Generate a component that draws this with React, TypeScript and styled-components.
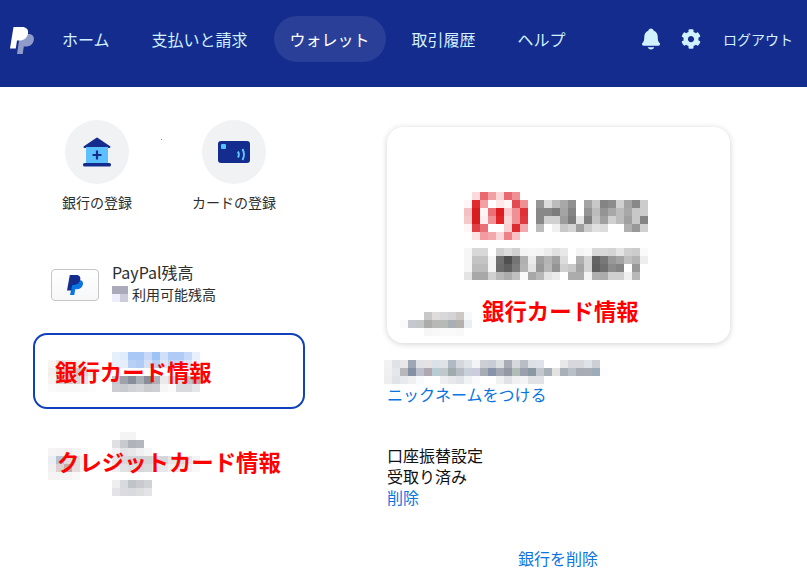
import { createGlobalStyle } from "styled-components";
import styled from "styled-components";
import { FaCog } from "react-icons/fa";
import { IoNotifications } from "react-icons/io5";

const GlobalStyle = createGlobalStyle`
    html, body {
        margin: 0;
        padding: 0;
        background: #fff;
    }
    body {
        font-family: "Noto Sans CJK JP", "Noto Sans", sans-serif;
        color: #1a1a1a;
    }
`;

const PageEl = styled.div`
    width: 807px;
    height: 584px;
    overflow: hidden;
`;

const HeaderEl = styled.header`
    height: 87px;
    background: #142c8e;
    display: flex;
    align-items: flex-start;
    box-sizing: border-box;
    padding: 16px 14px 0 10px;
`;

const LogoEl = styled.svg`
    width: 24px;
    height: 29px;
    margin-top: 10px;
    margin-right: 12px;
    flex: none;
`;

const NavEl = styled.nav`
    display: flex;
    gap: 10px;
`;

const NavItemEl = styled.a<{ $active?: boolean }>`
    height: 46px;
    padding: 0 16px;
    border-radius: 23px;
    display: flex;
    align-items: center;
    font-size: 16px;
    color: ${(props) => (props.$active ? "#fff" : "#d1f1ff")};
    background: ${(props) => (props.$active ? "#2a3f97" : "transparent")};
`;

const HeaderRightEl = styled.div`
    margin-left: auto;
    height: 46px;
    display: flex;
    align-items: center;
    color: #d1f1ff;
`;

const BellEl = styled(IoNotifications)`
    font-size: 24px;
    margin-right: 18px;
`;

const GearEl = styled(FaCog)`
    font-size: 20px;
    margin-right: 22px;
`;

const LogoutEl = styled.a`
    font-size: 14px;
    color: #d1f1ff;
`;

const MainEl = styled.main`
    display: flex;
    padding-left: 33px;
`;

const LeftColEl = styled.section`
    width: 272px;
    position: relative;
`;

const ActionsEl = styled.div`
    display: flex;
    padding: 33px 0 0 16px;
    gap: 41px;
`;

const ActionEl = styled.div`
    width: 96px;
    display: flex;
    flex-direction: column;
    align-items: center;
`;

const CircleEl = styled.div`
    width: 64px;
    height: 64px;
    border-radius: 50%;
    background: #f1f2f4;
    display: flex;
    align-items: center;
    justify-content: center;
`;

const ActionLabelEl = styled.div`
    margin-top: 8px;
    font-size: 14px;
    line-height: 20px;
    white-space: nowrap;
    color: #2c2e2f;
`;

const SpeckEl = styled.i`
    position: absolute;
    left: 128px;
    top: 52px;
    width: 1px;
    height: 1px;
    background: #8a8a8a;
`;

const BalanceRowEl = styled.div`
    display: flex;
    align-items: flex-start;
    margin: 50px 0 0 18px;
    gap: 13px;
`;

const CardThumbEl = styled.div`
    width: 46px;
    height: 30px;
    margin-top: 7px;
    border: 1px solid #c4c6c8;
    border-radius: 4px;
    background: linear-gradient(#fff, #f7f7f7);
    display: flex;
    align-items: center;
    justify-content: center;
`;

const BalanceNameEl = styled.div`
    font-size: 16px;
    line-height: 20px;
    color: #2c2e2f;
`;

const BalanceSubEl = styled.div`
    display: flex;
    align-items: center;
    gap: 4px;
    font-size: 14px;
    line-height: 16px;
    margin-top: 4px;
    color: #2c2e2f;
`;

const AccountEl = styled.div<{ $selected?: boolean }>`
    position: relative;
    width: 272px;
    height: 76px;
    box-sizing: border-box;
    margin-top: ${(props) => (props.$selected ? "31px" : "21px")};
    border: ${(props) => (props.$selected ? "2px solid #1040bc" : "2px solid transparent")};
    border-radius: 14px;
`;

const AccountMosaicEl = styled.div<{ $top: number }>`
    position: absolute;
    left: 13px;
    top: ${(props) => props.$top}px;
    line-height: 0;
`;

const AnnotationEl = styled.div<{ $left?: number; $top?: number }>`
    position: absolute;
    left: ${(props) => props.$left ?? 0}px;
    top: ${(props) => props.$top ?? 0}px;
    font-size: 22.4px;
    line-height: 30px;
    font-weight: 700;
    color: #f00;
    white-space: nowrap;
`;

const RightColEl = styled.section`
    margin-left: 82px;
    width: 343px;
    position: relative;
    padding-top: 40px;
`;

const BankCardEl = styled.div`
    position: relative;
    height: 216px;
    box-sizing: border-box;
    border-radius: 16px;
    background: #fff;
    box-shadow: 0 1px 6px rgba(0, 0, 0, 0.18);
    padding: 65px 0 0 77px;
`;

const LogoMosaicRowEl = styled.div`
    display: flex;
    line-height: 0;
`;

const LogoNameEl = styled.div`
    margin: 8px 0 0 8px;
    line-height: 0;
`;

const LogoLowerEl = styled.div`
    margin-top: 8px;
    line-height: 0;
`;

const CardFooterMosaicEl = styled.div`
    position: absolute;
    left: 13px;
    top: 185px;
    line-height: 0;
`;

const NickMosaicEl = styled.div`
    margin: 17px 0 0 -3px;
    line-height: 0;
`;

const LinkEl = styled.a`
    display: block;
    font-size: 16px;
    line-height: 21px;
    color: #0a75e0;
`;

const StatusEl = styled.div`
    margin-top: 41px;
    font-family: "Liberation Sans", "Noto Sans CJK JP", sans-serif;
    font-size: 16px;
    line-height: 21px;
    color: #111;
`;

const RemoveEl = styled(LinkEl)`
    margin: 39px 0 0 131px;
`;

// モザイクは1セル8pxの色データで描く
function Mosaic({ rows, cell = 8 }: { rows: string[]; cell?: number }) {
    const grid = rows.map((row) => row.split(" "));
    const cols = Math.max(...grid.map((row) => row.length));
    return (
        <svg
            width={cols * cell}
            height={grid.length * cell}
            shapeRendering="crispEdges"
        >
            {grid.map((row, y) =>
                row.map((color, x) =>
                    color === "." ? null : (
                        <rect
                            key={`${x}-${y}`}
                            x={x * cell}
                            y={y * cell}
                            width={cell}
                            height={cell}
                            fill={`#${color}`}
                        />
                    )
                )
            )}
        </svg>
    );
}

const BALANCE_MOSAIC = ["aab aab", "eef ccd"];

const BANK_MOSAIC = [
    ". . . . . . . . e6effc e0ebfc a8c8f6 a8c8f6 c8d8f6 9cc4f4 d0e0f8 b0ccf6 b0ccf6 c8d8f8 e8f0fb .",
    "f8f4f2 f0e4e0 f0e8e4 f4f0ee f8f6f4 fafafa . . e8f0fc e4eefc b8d0f6 b0ccf6 d4e0f8 b8d0f6 dce8fa c0d4f8 c4d8f8 d8e4f8 f0f4fc .",
    "f2eeec d8d4d2 cfcbc8 ccc8c8 dcd8d8 ececec f6f6f6 . fff fff fff fff fff fff fff fff fff fff fff .",
    "f6f2f0 d4d0cc d0ccc8 d8d4d0 e8e6e4 f6f6f6 . . c4c6ce 9ea2aa 8a8e9c a8b0b6 8a8e9c aab0b6 e8eaec d8dadf d8dade c0c4c8 a8acb4 f0f6fc",
    "fafafa f8f8f8 f8f8f8 f8f8f8 fafafa fcfcfc . . ccccd2 c8cacf d0d2d6 d4d6da cacccf ccd0d4 f6f6f6 fafafa d8dade d8dade e4e6e8 .",
];

const CREDIT_MOSAIC = [
    ". . . . . . . . . f4f4f5 f4f4f5 . . . . . . . .",
    ". . . . . . . . e0e0e4 c8cad0 b0b4ba b4b8be . . . . . . . .",
    "f6f4f4 f4f2f2 f0eeee f4f4f4 f8f8f8 . . . f2f2f4 e4e4e8 e8e8ea f0f0f2 f6f6f6 . . . . . .",
    "eaeef2 b8c4d4 e0dcdc d8e4d8 f2f2f2 . . . e8e8ea d8d8dc d4d6da cfd2d6 d0d2d6 d8dade d4d6da e6e6e8 d8dade e6e6e8 f4f4f4",
    "f0f0f0 dcd0d0 c8a8a8 e4dcdc f4f4f4 . . . eeeef0 e0e2e4 dcdee2 d4d6da d8dadc e4e6e8 e6e8ea f0f0f2 e8e8ea f0f0f2 f8f8f8",
    "f4f4f4 f4f4f4 f4f4f4 f8f8f8 . . . . . . . . . . . . . .",
    ". . . . . . . . eeeeee d8dade c0c4c8 c8cad0 d0d2d6 . . . . .",
    ". . . . . . . . e4e4e8 dcdce0 d8dade dcdee0 e4e4e8 . . . . .",
];

const FOOTER_MOSAIC = [
    ". . . c8c8c8 dedddc d8d8da d4d4d8 ccc8c4 f6f8fa",
    "fbfafb c6c8d0 c4c6c8 acacaa b8b8b8 b8bab8 a8b0b4 b4b0ac e8eef2",
    ". . . f6f6f6 f8f8f8 fafafa fafafa f8f8f8 .",
];

const NICK_MOSAIC = [
    "f2f2f2 dfe3e8 e8e8ea 9da8b4 dfe3e8 e6e2e4 d8e2e8 dfe3e8 b0bac4 d4d8dc e0e4e8 f2f4f6 ccd0d6 c8ccd4 dde0e0 a8acb6 d6d8dc b8bec6 dde0e4 dde3e8 fff fff e8e8ea d8d8dc d8d8dc dde3e8 ccd0d4 .",
    "f0f0f0 e4e8ec b8b8bc 8490a4 bcc0cc b0a8b0 b8ccd4 c0c8cc a0acac b8bcc4 c8d0dc ccccdc a8acb4 8894a8 a4a8b4 9498a4 b0bcb8 9ca0ac 8a98a4 c4c8cc a8b0b8 e4e2e0 aab0b8 b8c0c8 a8acb4 a8aeb4 9cacb8 fbfdff",
    "eeeeee e0e4e8 e8eaee f0f0f2 f8fafc fff fff eeeef2 e8e8ec e0e4e8 f0f2f4 fafafc fff fff f0f2f2 dfe3e8 f0f0f2 f4f4f6 e0e2e6 dfe3e8 . . . . . . . .",
];

const LOGO_RED = [
    "fff fadadd e86a70 f2a0a4 fad8da e86a70 f09094 fff",
    "fdf5f6 e02a30 f2a0a4 fff fce8e8 fff5f5 e24a50 f09094",
    "f5c0c4 d81c20 fff5f5 e87076 dc1c20 f8c8cc f09094 e03038",
    "f5c8ca d81c20 fdeef0 f09094 e02428 fad8da f09094 e03a40",
    "fdf5f6 e04048 e87076 fff fff f8d0d4 dc2a30 f2a8ac",
    "fff fce0e2 f29ca0 f2a8ac fad8da ee8088 f8c0c4 fff",
];

const LOGO_NAME = [
    "969696 dcdcdc bcbcbc a8a8a8 909090 fff a4a4a4 c8c8c8 848484 8c8c8c d0d0d0 a4a4a4 888888 cccccc",
    "888888 888888 7c7c7c a4a4a4 848484 fff 949494 bcbcbc 949494 a8a8a8 bcbcbc a8a8a8 c8c8c8 cccccc",
    "888888 d0d0d0 d0d0d0 9c9c9c 7c7c7c e4e4e4 808080 c4c4c4 a0a0a0 d0d0d0 bcbcbc a0a0a0 c8c8c8 848484",
    "bcbcbc fff f0f0f0 c8c8c8 d4d4d4 a0a0a0 cccccc e0e0e0 dcdcdc fff fff b0b0b0 989898 d0d0d0",
];

const LOGO_LOWER = [
    "f6f6f6 d8d8d8 d8d8d8 fff d0d0d0 dcdcdc d0d0d0 f4f4f4 f6f6f6 f4f4f4 ececec e0e0e0 e8e8e8 fff f4f4f4 f8f8f8 d8d8d8 d8d8d8 d4d4d4 e4e4e4 d0d0d0 cccccc fafafa",
    "f6f6f6 c4c4c4 c4c4c4 f4f4f4 707070 505050 747474 b0b0b0 ececec a0a0a0 b4b4b4 a0a0a0 dcdcdc fff b0b0b0 d4d4d4 646464 787878 989898 a4a4a4 c0c0c0 b4b4b4 eeeeee",
    "f6f6f6 bcbcbc bcbcbc f4f4f4 6c6c6c 606060 7c7c7c b4b4b4 e4e4e4 989898 b8b8b8 949494 d0d0d0 c8c8c8 a4a4a4 d4d4d4 606060 707070 8c8c8c 848484 fff 989898 fff",
    "e4e4e4 a8a8a8 a8a8a8 d0d0d0 b8b8b8 acacac c0c0c0 fafafa a8a8a8 b8b8b8 e4e4e4 ececec fff acacac acacac f4f4f4 b0b0b0 acacac d0d0d0 d0d0d0 f0f0f0 b8b8b8 fff",
];

export default function App() {
    return (
        <PageEl>
            <GlobalStyle />
            <HeaderEl>
                <LogoEl viewBox="0 0 24 29">
                    <path
                        d="M10 8h8.500c3.500 0 6 2.300 5.300 6-.8 4.500-4 6.500-8 6.500h-2L12.700 28H7z"
                        fill="#8f9cca"
                    />
                    <path
                        d="M3.500 1H12c4 0 6.800 2.200 6 6.500-.9 4.700-4.200 7-8.500 7H7L5.800 22.500H0z"
                        fill="#fff"
                    />
                </LogoEl>
                <NavEl>
                    <NavItemEl>ホーム</NavItemEl>
                    <NavItemEl>支払いと請求</NavItemEl>
                    <NavItemEl $active>ウォレット</NavItemEl>
                    <NavItemEl>取引履歴</NavItemEl>
                    <NavItemEl>ヘルプ</NavItemEl>
                </NavEl>
                <HeaderRightEl>
                    <BellEl />
                    <GearEl />
                    <LogoutEl>ログアウト</LogoutEl>
                </HeaderRightEl>
            </HeaderEl>
            <MainEl>
                <LeftColEl>
                    <SpeckEl />
                    <ActionsEl>
                        <ActionEl>
                            <CircleEl>
                                <svg width="30" height="30" viewBox="0 0 30 30">
                                    <path d="M15 1.500 27.500 10H2.500z" fill="#142c8e" stroke="#142c8e" strokeWidth="2" strokeLinejoin="round" />
                                    <rect x="4" y="10" width="22" height="17" fill="#5cc0ff" />
                                    <rect x="1" y="26" width="28" height="3.500" rx="1.500" fill="#142c8e" />
                                    <path d="M13.900 13.500h2.200v3.400h3.400v2.200h-3.400v3.400h-2.200v-3.400h-3.400v-2.200h3.400z" fill="#142c8e" />
                                </svg>
                            </CircleEl>
                            <ActionLabelEl>銀行の登録</ActionLabelEl>
                        </ActionEl>
                        <ActionEl>
                            <CircleEl>
                                <svg width="32" height="22" viewBox="0 0 32 22">
                                    <rect width="32" height="22" rx="3" fill="#142c8e" />
                                    <rect x="3" y="3" width="5" height="5" rx="1" fill="#4fc4ff" />
                                    <path d="M20 10.500c1.100 2 1.100 4 0 6" stroke="#5cc8ff" strokeWidth="2" fill="none" />
                                    <path d="M24.500 8c1.900 3.500 1.900 7.500 0 11" stroke="#5cc8ff" strokeWidth="2" fill="none" />
                                </svg>
                            </CircleEl>
                            <ActionLabelEl>カードの登録</ActionLabelEl>
                        </ActionEl>
                    </ActionsEl>
                    <BalanceRowEl>
                        <CardThumbEl>
                            <svg width="16" height="21" viewBox="0 0 16 21">
                                <path d="M6 5h6c3 0 4.500 1.800 3.900 4.500-.6 3-3 4.800-6 4.800H8.200L7.300 20H3z" fill="#0a75e0" />
                                <path d="M2.800 0H9c3 0 4.800 1.600 4.300 4.600-.6 3.500-3 5.400-6.300 5.400H5.300l-.9 5.500H0z" fill="#142c8e" />
                            </svg>
                        </CardThumbEl>
                        <div>
                            <BalanceNameEl>PayPal残高</BalanceNameEl>
                            <BalanceSubEl>
                                <Mosaic rows={BALANCE_MOSAIC} />
                                利用可能残高
                            </BalanceSubEl>
                        </div>
                    </BalanceRowEl>
                    <AccountEl $selected>
                        <AccountMosaicEl $top={17}>
                            <Mosaic rows={BANK_MOSAIC} />
                        </AccountMosaicEl>
                        <AnnotationEl $left={20} $top={21}>銀行カード情報</AnnotationEl>
                    </AccountEl>
                    <AccountEl>
                        <AccountMosaicEl $top={0}>
                            <Mosaic rows={CREDIT_MOSAIC} />
                        </AccountMosaicEl>
                        <AnnotationEl $left={22} $top={14}>クレジットカード情報</AnnotationEl>
                    </AccountEl>
                </LeftColEl>
                <RightColEl>
                    <BankCardEl>
                        <LogoMosaicRowEl>
                            <Mosaic rows={LOGO_RED} />
                            <LogoNameEl>
                                <Mosaic rows={LOGO_NAME} />
                            </LogoNameEl>
                        </LogoMosaicRowEl>
                        <LogoLowerEl>
                            <Mosaic rows={LOGO_LOWER} />
                        </LogoLowerEl>
                        <CardFooterMosaicEl>
                            <Mosaic rows={FOOTER_MOSAIC} />
                        </CardFooterMosaicEl>
                        <AnnotationEl $left={95} $top={168}>銀行カード情報</AnnotationEl>
                    </BankCardEl>
                    <NickMosaicEl>
                        <Mosaic rows={NICK_MOSAIC} />
                    </NickMosaicEl>
                    <LinkEl>ニックネームをつける</LinkEl>
                    <StatusEl>
                        口座振替設定
                        <br />
                        受取り済み
                        <LinkEl>削除</LinkEl>
                    </StatusEl>
                    <RemoveEl>銀行を削除</RemoveEl>
                </RightColEl>
            </MainEl>
        </PageEl>
    );
}
